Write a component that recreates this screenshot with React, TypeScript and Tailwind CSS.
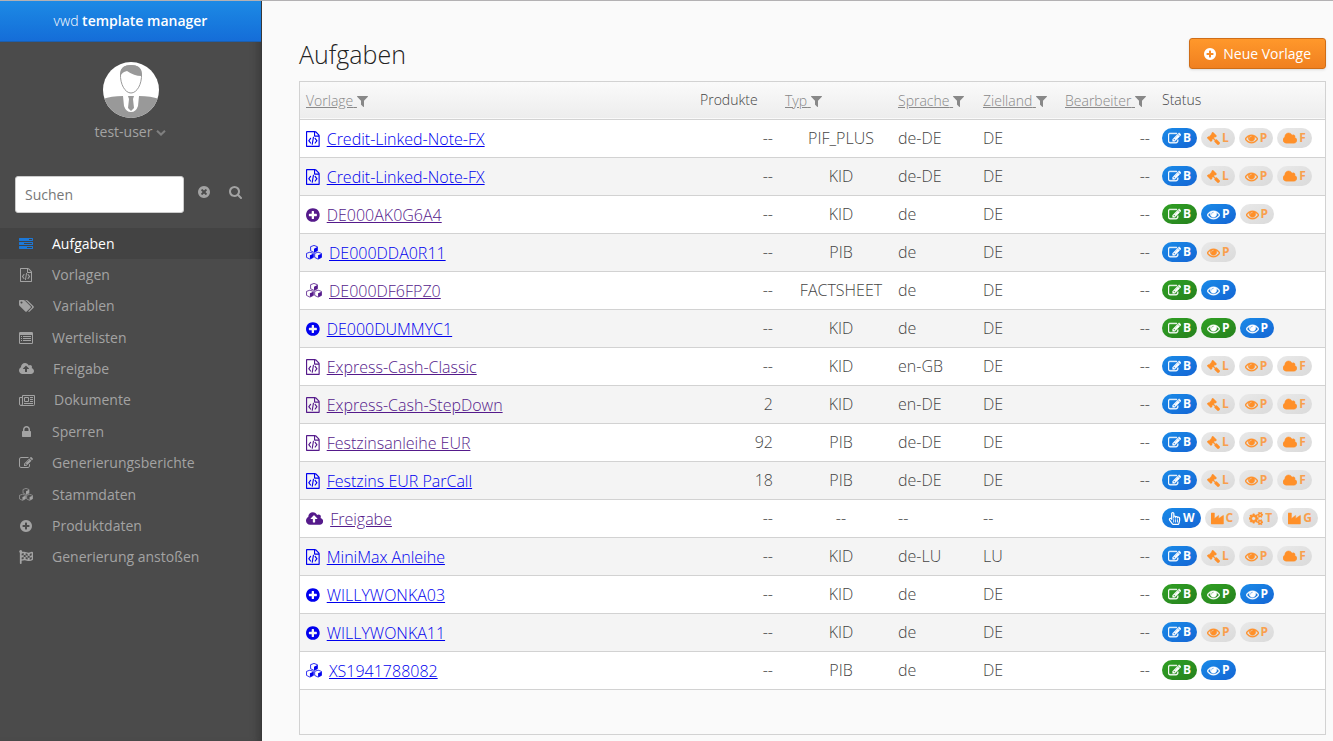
import clsx from "clsx";
import { FaFlagCheckered, FaRegHandPointer, FaRegNewspaper } from "react-icons/fa";

const DISC =
  "m0 0M1664 896q0 209-103 385.5t-279.5 279.5-385.5 103-385.5-103-279.5-279.5-103-385.5 103-385.5 279.5-279.5 385.5-103 385.5 103 279.5 279.5 103 385.5z";
const CLOUD =
  "M1856 1152q0 159-112.5 271.5t-271.5 112.5h-1088q-185 0-316.5-131.5t-131.5-316.5q0-132 71-241.5t187-163.5q-2-28-2-43 0-212 150-362t362-150q158 0 286.5 88t187.5 230q70-62 166-62 106 0 181 75t75 181q0 75-41 138 129 30 213 134.5t84 239.5z";
const SMALL_COG =
  "v140q0 16-149 31-12 27-30 52 51 113 51 138 0 4-4 7-122 71-124 71-8 0-46-47t-52-68q-20 2-30 2t-30-2q-14 21-52 68t-46 47q-2 0-124-71-4-3-4-7 0-25 51-138-18-25-30-52-149-15-149-31v-140q0-16 149-31 13-29 30-52-51-113-51-138 0-4 4-7 4-2 35-20t59-34 30-16q8 0 46 46.5t52 67.5q20-2 30-2t30 2q51-71 92-112l6-2q4 0 124 70 4 3 4 7 0 25-51 138 17 23 30 52 149 15 149 31z";

// x offset, width, path data; every icon is 1792 units high
const icons: Record<string, [number, number, string]> = {
  edit: [
    0,
    1792,
    "M888 1184l116-116-152-152-116 116v56h96v96h56zm440-720q-16-16-33 1l-350 350q-17 17-1 33t33-1l350-350q17-17 1-33zm80 594v190q0 119-84.5 203.5t-203.5 84.5h-832q-119 0-203.5-84.5t-84.5-203.5v-832q0-119 84.5-203.5t203.5-84.5h832q63 0 117 25 15 7 18 23 3 17-9 29l-49 49q-14 14-32 8-23-6-45-6h-832q-66 0-113 47t-47 113v832q0 66 47 113t113 47h832q66 0 113-47t47-113v-126q0-13 9-22l64-64q15-15 35-7t20 29zm-96-738l288 288-672 672h-288v-288zm444 132l-92 92-288-288 92-92q28-28 68-28t68 28l152 152q28 28 28 68t-28 68z",
  ],
  plus: [
    128,
    1536,
    "M1344 960v-128q0-26-19-45t-45-19h-256v-256q0-26-19-45t-45-19h-128q-26 0-45 19t-19 45v256h-256q-26 0-45 19t-19 45v128q0 26 19 45t45 19h256v256q0 26 19 45t45 19h128q26 0 45-19t19-45v-256h256q26 0 45-19t19-45z" +
      DISC,
  ],
  times: [
    128,
    1536,
    "M1277 1122q0-26-19-45l-181-181 181-181q19-19 19-45 0-27-19-46l-90-90q-19-19-46-19-26 0-45 19l-181 181-181-181q-19-19-45-19-27 0-46 19l-90 90q-19 19-19 46 0 26 19 45l181 181-181 181q-19 19-19 45 0 27 19 46l90 90q19 19 46 19 26 0 45-19l181-181 181 181q19 19 45 19 27 0 46-19l90-90q19-19 19-46z" +
      DISC,
  ],
  eye: [
    0,
    1792,
    "M1664 960q-152-236-381-353 61 104 61 225 0 185-131.5 316.5t-316.5 131.5-316.5-131.5-131.5-316.5q0-121 61-225-229 117-381 353 133 205 333.5 326.5t434.5 121.5 434.5-121.5 333.5-326.5zm-720-384q0-20-14-34t-34-14q-125 0-214.5 89.5t-89.5 214.5q0 20 14 34t34 14 34-14 14-34q0-86 61-147t147-61q20 0 34-14t14-34zm848 384q0 34-20 69-140 230-376.5 368.5t-499.5 138.5-499.5-139-376.5-368q-20-35-20-69t20-69q140-229 376.5-368t499.5-139 499.5 139 376.5 368q20 35 20 69z",
  ],
  cloud: [-64, 1920, CLOUD],
  upload: [
    -64,
    1920,
    "M1216 864q0-14-9-23l-352-352q-9-9-23-9t-23 9l-351 351q-10 12-10 24 0 14 9 23t23 9h224v352q0 13 9.5 22.5t22.5 9.5h192q13 0 22.5-9.5t9.5-22.5v-352h224q13 0 22.5-9.5t9.5-22.5z" +
      CLOUD,
  ],
  filter: [
    192,
    1408,
    "M1595 295q17 41-14 70l-493 493v742q0 42-39 59-13 5-25 5-27 0-45-19l-256-256q-19-19-19-45v-486l-493-493q-31-29-14-70 17-39 59-39h1280q42 0 59 39z",
  ],
  lock: [
    320,
    1152,
    "M640 768h512v-192q0-106-75-181t-181-75-181 75-75 181v192zm832 96v576q0 40-28 68t-68 28h-960q-40 0-68-28t-28-68v-576q0-40 28-68t68-28h32v-192q0-184 132-316t316-132 316 132 132 316v192h32q40 0 68 28t28 68z",
  ],
  search: [
    64,
    1728,
    "M1216 832q0-185-131.5-316.5t-316.5-131.5-316.5 131.5-131.5 316.5 131.5 316.5 316.5 131.5 316.5-131.5 131.5-316.5zm512 832q0 52-38 90t-90 38q-54 0-90-38l-343-342q-179 124-399 124-143 0-273.5-55.5t-225-150-150-225-55.5-273.5 55.5-273.5 150-225 225-150 273.5-55.5 273.5 55.5 225 150 150 225 55.5 273.5q0 220-124 399l343 343q37 37 37 90z",
  ],
  tasks: [
    0,
    1792,
    "M1024 1408h640v-128h-640v128zm-384-512h1024v-128h-1024v128zm640-512h384v-128h-384v128zm512 832v256q0 26-19 45t-45 19h-1664q-26 0-45-19t-19-45v-256q0-26 19-45t45-19h1664q26 0 45 19t19 45zm0-512v256q0 26-19 45t-45 19h-1664q-26 0-45-19t-19-45v-256q0-26 19-45t45-19h1664q26 0 45 19t19 45zm0-512v256q0 26-19 45t-45 19h-1664q-26 0-45-19t-19-45v-256q0-26 19-45t45-19h1664q26 0 45 19t19 45z",
  ],
  list: [
    0,
    1792,
    "M160 128h1472q160 0 160 160v1216q0 160-160 160h-1472q-160 0-160-160v-1216q0-160 160-160zM128 512v992q0 32 32 32h1472q32 0 32-32v-992zM256 640h128v128h-128zM512 640h1024v128h-1024zM256 896h128v128h-128zM512 896h1024v128h-1024zM256 1152h128v128h-128zM512 1152h1024v128h-1024z",
  ],
  tags: [
    128,
    1920,
    "M576 448q0-53-37.5-90.5t-90.5-37.5-90.5 37.5-37.5 90.5 37.5 90.5 90.5 37.5 90.5-37.5 37.5-90.5zm1067 576q0 53-37 90l-491 492q-39 37-91 37-53 0-90-37l-715-716q-38-37-64.5-101t-26.5-117v-416q0-52 38-90t90-38h416q53 0 117 26.5t102 64.5l715 714q37 39 37 91zm384 0q0 53-37 90l-491 492q-39 37-91 37-36 0-59-14t-53-45l470-470q37-37 37-90 0-52-37-91l-715-714q-38-38-102-64.5t-117-26.5h224q53 0 117 26.5t102 64.5l715 714q37 39 37 91z",
  ],
  gavel: [
    0,
    1792,
    "M1771 1536q0 53-37 90l-107 108q-39 37-91 37-53 0-90-37l-363-364q-38-36-38-90 0-53 43-96l-256-256-126 126q-14 14-34 14t-34-14q2 2 12.5 12t12.5 13 10 11.5 10 13.5 6 13.5 5.5 16.5 1.5 18q0 38-28 68-3 3-16.5 18t-19 20.5-18.5 16.5-22 15.5-22 9-26 4.5q-40 0-68-28l-408-408q-28-28-28-68 0-13 4.5-26t9-22 15.5-22 16.5-18.5 20.5-19 18-16.5q30-28 68-28 10 0 18 1.5t16.5 5.5 13.5 6 13.5 10 11.5 10 13 12.5 12 12.5q-14-14-14-34t14-34l348-348q14-14 34-14t34 14q-2-2-12.5-12t-12.5-13-10-11.5-10-13.5-6-13.5-5.5-16.5-1.5-18q0-38 28-68 3-3 16.5-18t19-20.5 18.5-16.5 22-15.5 22-9 26-4.5q40 0 68 28l408 408q28 28 28 68 0 13-4.5 26t-9 22-15.5 22-16.5 18.5-20.5 19-18 16.5q-30 28-68 28-10 0-18-1.5t-16.5-5.5-13.5-6-13.5-10-11.5-10-13-12.5-12-12.5q14 14 14 34t-14 34l-126 126 256 256q43-43 96-43 52 0 91 37l363 363q37 39 37 91z",
  ],
  cogs: [
    -64,
    1920,
    "M832 896q0-106-75-181t-181-75-181 75-75 181 75 181 181 75 181-75 75-181zm768 512q0-52-38-90t-90-38-90 38-38 90q0 53 37.5 90.5t90.5 37.5 90.5-37.5 37.5-90.5zm0-1024q0-52-38-90t-90-38-90 38-38 90q0 53 37.5 90.5t90.5 37.5 90.5-37.5 37.5-90.5zm-384 421v185q0 10-7 19.5t-16 10.5l-155 24q-11 35-32 76 34 48 90 115 7 11 7 20 0 12-7 19-23 30-82.5 89.5t-78.5 59.5q-11 0-21-7l-115-90q-37 19-77 31-11 108-23 155-7 24-30 24h-186q-11 0-20-7.5t-10-17.5l-23-153q-34-10-75-31l-118 89q-7 7-20 7-11 0-21-8-144-133-144-160 0-9 7-19 10-14 41-53t47-61q-23-44-35-82l-152-24q-10-1-17-9.5t-7-19.5v-185q0-10 7-19.5t16-10.5l155-24q11-35 32-76-34-48-90-115-7-11-7-20 0-12 7-20 22-30 82-89t79-59q11 0 21 7l115 90q34-18 77-32 11-108 23-154 7-24 30-24h186q11 0 20 7.5t10 17.5l23 153q34 10 75 31l118-89q8-7 20-7 11 0 21 8 144 133 144 160 0 8-7 19-12 16-42 54t-45 60q23 48 34 82l152 23q10 2 17 10.5t7 19.5zM1856 1338" +
      SMALL_COG +
      "M1856 314" +
      SMALL_COG,
  ],
  industry: [
    0,
    1792,
    "M64 128h384q32 0 32 32v736l544-416q32-16 32 16v400l600-416q72-32 72 16v1104q0 64-64 64h-1600q-64 0-64-64v-1408q0-64 64-64z",
  ],
  file: [
    128,
    1536,
    "M1596 380q28 28 48 76t20 88v1152q0 40-28 68t-68 28h-1344q-40 0-68-28t-28-68v-1600q0-40 28-68t68-28h896q40 0 88 20t76 48zm-444-244v376h376q-10-29-22-41l-313-313q-12-12-41-22zm384 1528v-1024h-416q-40 0-68-28t-28-68v-416h-768v1536h1280zM608 768q8-11 21-12.5t24 6.5l51 38q11 8 12.5 21t-6.5 24l-182 243 182 243q8 11 6.5 24t-12.5 21l-51 38q-11 8-24 6.5t-21-12.5l-226-301q-14-19 0-38zm802 301q14 19 0 38l-226 301q-8 11-21 12.5t-24-6.5l-51-38q-11-8-12.5-21t6.5-24l182-243-182-243q-8-11-6.5-24t12.5-21l51-38q11-8 24-6.5t21 12.5zm-620 461q-13-2-20.5-13t-5.5-24l138-831q2-13 13-20.5t24-5.5l63 10q13 2 20.5 13t5.5 24l-138 831q-2 13-13 20.5t-24 5.5z",
  ],
};

const CUBE = "M0-400L380-260V190L0 380L-380 190V-260Z";
const CUBE_SIDE = "M0-40L380-220V190L0 380Z";

const Icon = ({ name, size = 14 }: { name: string; size?: number }) => {
  if (name === "news") {
    return (
      <svg width={size + 2} height={size} viewBox="0 0 16 14" fill="none" stroke="currentColor" className="shrink-0">
        <path d="M3.500 2.500H15.500V11.500Q15.500 12.500 14.500 12.500H2Q0.500 12.500 0.500 11V4.500H3.500M3.500 2.500V11Q3.500 12.500 2 12.500" />
        <path d="M5.500 4.500H9.500V8.500H5.500ZM11 4.500H14M11 6.500H14M11 8.500H14M5 10.500H14" />
      </svg>
    );
  }
  if (name === "flag") return <FaFlagCheckered size={size} className="shrink-0" />;
  if (name === "hand") return <FaRegHandPointer size={size} className="shrink-0" />;
  if (name === "cubes") {
    return (
      <svg width={size} height={size} viewBox="0 0 1792 1792" className="shrink-0">
        {["translate(896 450)", "translate(440 1200)", "translate(1352 1200)"].map((place) => (
          <g key={place} transform={place} fill="none" stroke="currentColor" strokeWidth="90" strokeLinejoin="round">
            <path d={CUBE} />
            <path d={CUBE_SIDE} fill="currentColor" stroke="none" />
          </g>
        ))}
      </svg>
    );
  }
  const [x, width, path] = icons[name];
  return (
    <svg
      height={size}
      width={(size * width) / 1792}
      viewBox={`${x} 0 ${width} 1792`}
      fill="currentColor"
      fillRule="evenodd"
      className="inline-block shrink-0"
    >
      <path d={path} />
    </svg>
  );
};

const menu = [
  { icon: "tasks", label: "Aufgaben", active: true },
  { icon: "file", label: "Vorlagen" },
  { icon: "tags", label: "Variablen" },
  { icon: "list", label: "Wertelisten" },
  { icon: "upload", label: "Freigabe" },
  { icon: "news", label: "Dokumente" },
  { icon: "lock", label: "Sperren" },
  { icon: "edit", label: "Generierungsberichte" },
  { icon: "cubes", label: "Stammdaten" },
  { icon: "plus", label: "Produktdaten" },
  { icon: "flag", label: "Generierung anstoßen" },
];

const columns = [
  { label: "Vorlage", filter: true, width: "" },
  { label: "Produkte", filter: false, width: "w-[85px]" },
  { label: "Typ", filter: true, width: "w-[113px]" },
  { label: "Sprache", filter: true, width: "w-[85px]" },
  { label: "Zielland", filter: true, width: "w-[82px]" },
  { label: "Bearbeiter", filter: true, width: "w-[97px]" },
  { label: "Status", filter: false, width: "w-[169px]" },
];

// status entries: color (b = current, g = done, o = open) followed by the step letter
const rows = [
  { icon: "file", name: "Credit-Linked-Note-FX", count: "--", type: "PIF_PLUS", lang: "de-DE", country: "DE", status: "bB oL oP oF" },
  { icon: "file", name: "Credit-Linked-Note-FX", count: "--", type: "KID", lang: "de-DE", country: "DE", status: "bB oL oP oF" },
  { icon: "plus", name: "DE000AK0G6A4", visited: true, count: "--", type: "KID", lang: "de", country: "DE", status: "gB bP oP" },
  { icon: "cubes", name: "DE000DDA0R11", count: "--", type: "PIB", lang: "de", country: "DE", status: "bB oP" },
  { icon: "cubes", name: "DE000DF6FPZ0", visited: true, count: "--", type: "FACTSHEET", lang: "de", country: "DE", status: "gB bP" },
  { icon: "plus", name: "DE000DUMMYC1", count: "--", type: "KID", lang: "de", country: "DE", status: "gB gP bP" },
  { icon: "file", name: "Express-Cash-Classic", visited: true, count: "--", type: "KID", lang: "en-GB", country: "DE", status: "bB oL oP oF" },
  { icon: "file", name: "Express-Cash-StepDown", visited: true, count: "2", type: "KID", lang: "en-DE", country: "DE", status: "bB oL oP oF" },
  { icon: "file", name: "Festzinsanleihe EUR", visited: true, count: "92", type: "PIB", lang: "de-DE", country: "DE", status: "bB oL oP oF" },
  { icon: "file", name: "Festzins EUR ParCall", count: "18", type: "PIB", lang: "de-DE", country: "DE", status: "bB oL oP oF" },
  { icon: "upload", name: "Freigabe", visited: true, count: "--", type: "--", lang: "--", country: "--", status: "bW oC oT oG" },
  { icon: "file", name: "MiniMax Anleihe", count: "--", type: "KID", lang: "de-LU", country: "LU", status: "bB oL oP oF" },
  { icon: "plus", name: "WILLYWONKA03", count: "--", type: "KID", lang: "de", country: "DE", status: "gB gP bP" },
  { icon: "plus", name: "WILLYWONKA11", count: "--", type: "KID", lang: "de", country: "DE", status: "bB oP oP" },
  { icon: "cubes", name: "XS1941788082", count: "--", type: "PIB", lang: "de", country: "DE", status: "gB bP" },
];

const stepIcons: Record<string, string> = {
  B: "edit",
  L: "gavel",
  P: "eye",
  F: "cloud",
  W: "hand",
  C: "industry",
  T: "cogs",
  G: "industry",
};

const Pill = ({ code }: { code: string }) => {
  const [color, step] = code.split("");
  return (
    <span
      className={clsx(
        "flex h-5 items-center gap-[2px] rounded-full bg-linear-to-br px-[6px] text-xs font-bold",
        color === "b" && "from-[#1b8be8] to-[#1565d4] text-white",
        color === "g" && "from-[#30a024] to-[#26821d] text-white",
        color === "o" && "from-[#e9e9e9] to-[#dadada] text-[#ff9029]"
      )}
    >
      <span className="flex stroke-current stroke-[60]">
        <Icon name={stepIcons[step]} size={13} />
      </span>
      <span className={color === "o" ? "opacity-80" : ""}>{step}</span>
    </span>
  );
};

const Avatar = () => (
  <svg width="56" height="56" viewBox="0 0 56 56">
    <defs>
      <clipPath id="avatar">
        <circle cx="28" cy="28" r="28" />
      </clipPath>
    </defs>
    <g clipPath="url(#avatar)">
      <rect width="56" height="56" fill="#fff" />
      <path d="M0 37Q8 34 20 34L21 44Q23 50 28 50T35 44L36 34Q48 34 56 37V56H0Z" fill="#999" />
      <path d="M25 34H31L30 37L31 46L28 49L25 46L26 37Z" fill="#999" />
      <path d="M17.500 12Q18 3.500 28 3.500T38.500 12C39 22 34 31 28 31S17 22 17.500 12Z" fill="#fff" stroke="#999" />
      <path d="M17.500 14Q16 3 28 3T38.500 14Q31 14 24 9Q19 10 17.500 14Z" fill="#999" />
    </g>
  </svg>
);

const Sidebar = () => (
  <aside className="flex w-[262px] shrink-0 flex-col border-r border-[#383838] bg-[#4b4b4b] text-sm text-[#a3a3a3] shadow-[inset_-8px_0_8px_-6px_#383838]">
    <header className="flex h-[41px] items-center justify-center border-b border-[#1c5fae] bg-linear-to-b from-[#1d8ae5] to-[#156dd8] text-white">
      <span className="font-light">vwd</span>&nbsp;
      <span className="font-semibold">template manager</span>
    </header>
    <div className="flex flex-col items-center pt-5">
      <Avatar />
      <button className="mt-1 flex items-center gap-1 leading-5">
        test-user
        <svg width="10" height="6" viewBox="0 0 10 6" fill="none" stroke="#808080" strokeWidth="2" className="mt-[2px]">
          <path d="M1 0.700L5 4.500L9 0.700" />
        </svg>
      </button>
    </div>
    <form className="mt-[34px] flex pl-[15px]">
      <input
        type="text"
        placeholder="Suchen"
        aria-label="Suchen"
        className="h-[37px] w-[169px] rounded-[3px] border border-[#ccc] bg-white px-[9px] text-[#333] placeholder:text-[#777]"
      />
      <button type="reset" aria-label="Zurücksetzen" className="ml-[14px] h-[30px]">
        <Icon name="times" />
      </button>
      <button type="button" aria-label="Suche starten" className="ml-[19px] h-[30px]">
        <Icon name="search" />
      </button>
    </form>
    <nav className="mt-[15px] flex h-[345px] flex-col">
      {menu.map((item) => (
        <a
          key={item.label}
          href="#"
          className={clsx(
            "flex flex-1 items-center gap-[19px] pl-[19px]",
            item.active && "bg-black/10 font-medium text-white"
          )}
        >
          <span className={clsx("flex min-w-[14px] justify-center", item.active && "text-[#1c78d8]")}>
            <Icon name={item.icon} />
          </span>
          {item.label}
        </a>
      ))}
    </nav>
  </aside>
);

const App = () => {
  return (
    <div className="flex min-h-screen border-t border-[#b3b1b3] bg-[#fafafa] font-['Open_Sans',sans-serif]">
      <Sidebar />
      <main className="flex min-w-0 flex-1 flex-col pt-[37px] pr-[7px] pb-[6px] pl-[37px]">
        <div className="flex h-[31px] items-center justify-between">
          <h1 className="text-[25px] leading-7 font-light text-[#222]">Aufgaben</h1>
          <button className="flex h-[31px] items-center gap-[7px] rounded-[3px] border border-[#cf6d17] bg-linear-to-b from-[#ff982b] to-[#f08020] px-[14px] text-sm text-white shadow-sm">
            <Icon name="plus" />
            Neue Vorlage
          </button>
        </div>
        <div className="mt-3 flex-1 border border-[#d2d2d2]">
          <table className="w-full table-fixed border-collapse text-left text-base font-light text-[#444]">
            <thead>
              <tr className="h-[37px] border-b border-[#d2d2d2] bg-linear-to-b from-[#fafafa] to-[#ededed] text-sm">
                {columns.map((col) => (
                  <th key={col.label} className={clsx("px-[6px] font-light whitespace-nowrap", col.width)}>
                    {col.filter ? (
                      <a href="#" className="flex items-center pt-[2px] text-[#888]">
                        <span className="underline">{col.label}&nbsp;</span>
                        <Icon name="filter" />
                      </a>
                    ) : (
                      col.label
                    )}
                  </th>
                ))}
              </tr>
            </thead>
            <tbody>
              {rows.map((row, index) => (
                <tr key={index} className="h-[38px] border-b border-[#d2d2d2] bg-white even:bg-[#f4f4f4]">
                  <td className="px-[6px]">
                    <a
                      href="#"
                      className={clsx(
                        "flex items-center gap-[7px] pt-[2px]",
                        row.visited ? "text-[#551a8b]" : "text-[#0000ee]"
                      )}
                    >
                      <Icon name={row.icon} size={16} />
                      <span className="underline">{row.name}</span>
                    </a>
                  </td>
                  <td className="px-[6px] text-right">{row.count}</td>
                  <td className="pr-[6px] pl-[17px] text-center">{row.type}</td>
                  <td className="px-[6px]">{row.lang}</td>
                  <td className="px-[6px]">{row.country}</td>
                  <td className="px-[6px] text-right">--</td>
                  <td className="px-[6px]">
                    <div className="flex gap-1">
                      {row.status.split(" ").map((code, i) => (
                        <Pill key={i} code={code} />
                      ))}
                    </div>
                  </td>
                </tr>
              ))}
            </tbody>
          </table>
        </div>
      </main>
    </div>
  );
};

export default App;
